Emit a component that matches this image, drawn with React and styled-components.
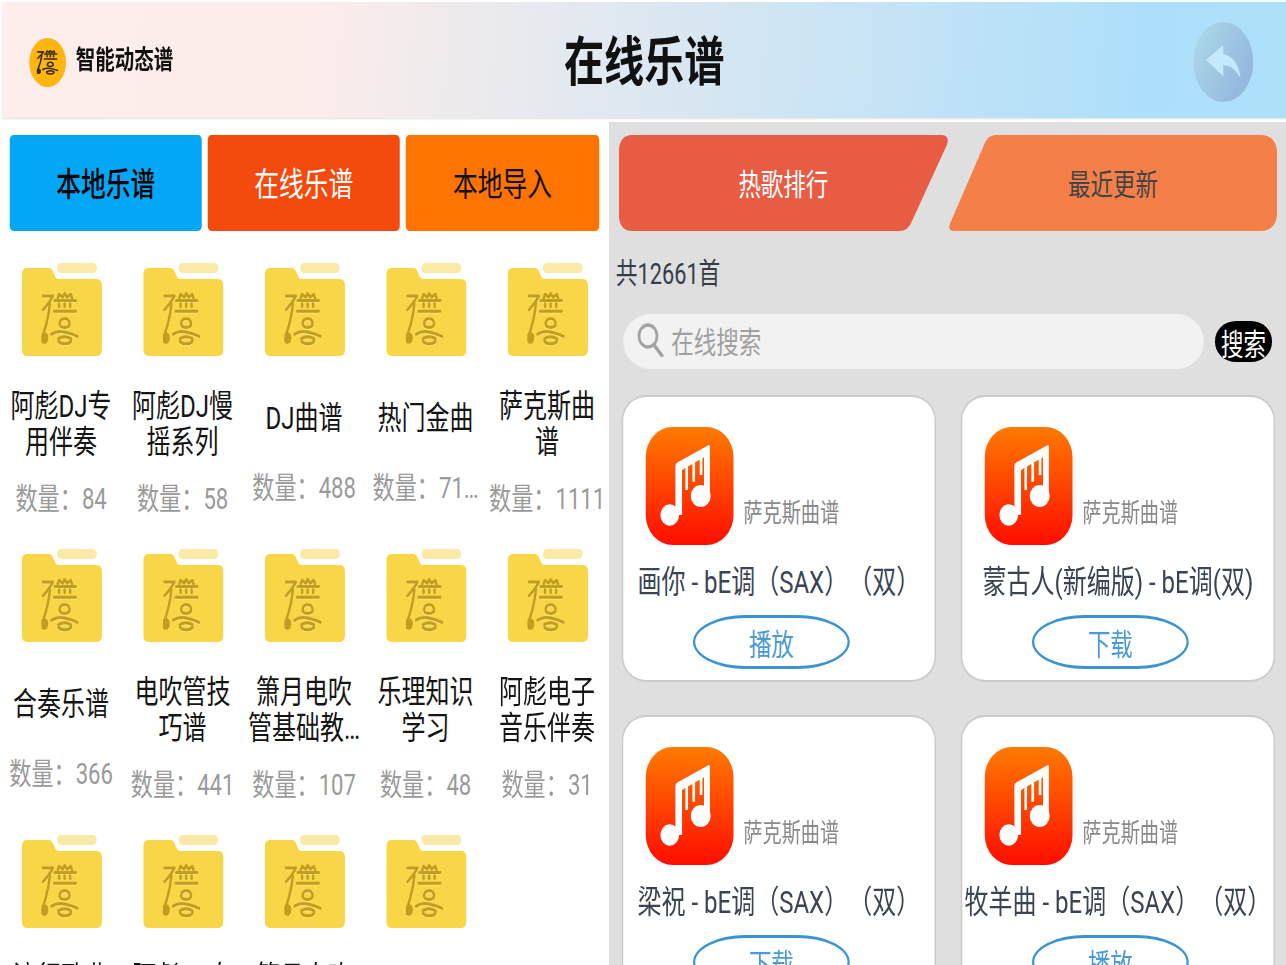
import React from "react";
import styled, { createGlobalStyle } from "styled-components";

const GlobalStyle = createGlobalStyle`
  html, body {
    margin: 0;
    padding: 0;
    overflow: hidden;
    background: #fff;
  }
  #root {
    width: 1286px;
    height: 965px;
    overflow: hidden;
  }
  * {
    box-sizing: border-box;
  }
`;

/* the app was photographed squeezed sideways, so the whole page is laid out wider and narrowed */
const Stage = styled.div`
  width: 1715px;
  height: 965px;
  transform: scale(0.75, 1);
  transform-origin: 0 0;
  font-family: Roboto, "Noto Sans CJK SC", sans-serif;
  text-spacing-trim: space-all;
  color: #111;
`;

const Header = styled.header`
  display: grid;
  grid-template-columns: 1fr auto 1fr;
  align-items: center;
  height: 116px;
  margin: 2px 0 4px 3px;
  padding: 4px 44px 0 44px;
  background: linear-gradient(96deg, #fdeeeb 0%, #fcedea 24%, #aedffa 88%, #aee0fa 100%);
  box-shadow: 0 1px 2px rgba(0, 0, 0, 0.12);
`;

const Brand = styled.div`
  display: flex;
  align-items: center;
  gap: 13px;
  margin-left: -8px;
`;

const Logo = styled.div`
  display: flex;
  align-items: center;
  justify-content: center;
  width: 49px;
  height: 49px;
  border-radius: 50%;
  background: #fdb50f;
`;

const BrandName = styled.span`
  font-size: 26px;
  font-weight: 700;
  line-height: 36px;
  margin-top: -4px;
`;

const Title = styled.h1`
  margin: 2px 0 0;
  font-size: 53.500px;
  font-weight: 700;
  line-height: 70px;
`;

const BackButton = styled.div`
  justify-self: end;
  width: 80px;
  height: 80px;
  border-radius: 50%;
  background: linear-gradient(120deg, #aedbe9, #8fb0dc);
`;

const Body = styled.div`
  display: flex;
  height: 843px;
`;

const LeftPanel = styled.section`
  width: 812px;
  padding-top: 13px;
  background: #fff;
`;

const TabRow = styled.div`
  display: flex;
  gap: 8px;
  padding: 0 13px;
`;

const Tab = styled.div`
  display: flex;
  align-items: center;
  justify-content: center;
  flex: ${({ $wide }) => ($wide ? "0 0 258px" : "0 0 256px")};
  height: 96px;
  padding-bottom: 2px;
  border-radius: 5px;
  background: ${({ $bg }) => $bg};
  color: ${({ $fg }) => $fg};
  font-size: 33px;
  font-weight: ${({ $bold }) => ($bold ? 500 : 400)};
`;

const FolderGrid = styled.div`
  display: grid;
  grid-template-columns: repeat(5, 162px);
  grid-auto-rows: 286px;
  padding: 32px 0 0 1px;
`;

const FolderItem = styled.div`
  display: flex;
  flex-direction: column;
  align-items: center;
`;

const FolderText = styled.div`
  flex: 1;
  display: flex;
  flex-direction: column;
  align-items: center;
  justify-content: center;
  gap: ${({ $single }) => ($single ? "34px" : "21px")};
`;

const FolderName = styled.div`
  width: 154px;
  margin-left: -1px;
  font-size: 32px;
  line-height: 36px;
  text-align: center;
  color: #151515;
`;

const FolderCount = styled.div`
  margin-left: -1px;
  font-size: 29.500px;
  line-height: 36px;
  white-space: nowrap;
  color: #9a9a9a;
`;

const RightPanel = styled.section`
  flex: 1;
  padding-top: 13px;
  background: #dfdfdf;
`;

const SwitchRow = styled.div`
  display: flex;
  gap: 1px;
  padding-left: 13px;
`;

const SwitchButton = styled.div`
  display: flex;
  align-items: center;
  justify-content: center;
  width: ${({ $w }) => $w}px;
  height: 96px;
  padding-bottom: 2px;
  background: ${({ $bg }) => $bg};
  color: ${({ $fg }) => $fg};
  font-size: 30px;
  clip-path: path("${({ $shape }) => $shape}");
`;

const Total = styled.div`
  margin: 23px 0 20px 9px;
  font-size: 29px;
  line-height: 40px;
  color: #333d4a;
`;

const SearchRow = styled.div`
  display: flex;
  align-items: center;
  gap: 15px;
  padding-left: 19px;
`;

const SearchBox = styled.div`
  display: flex;
  align-items: center;
  gap: 10px;
  width: 774px;
  height: 55px;
  padding: 0 0 3px 18px;
  border-radius: 37px / 27px;
  background: #f2f2f2;
  color: #a0a0a0;
  font-size: 30px;
`;

const SearchButton = styled.div`
  display: flex;
  align-items: center;
  justify-content: center;
  width: 76px;
  height: 41px;
  border-radius: 28px / 20px;
  background: #000;
  color: #fff;
  font-size: 30px;
`;

const CardGrid = styled.div`
  display: grid;
  grid-template-columns: repeat(2, 419px);
  grid-auto-rows: 287px;
  gap: 33px;
  padding: 26px 0 0 17px;
`;

const Card = styled.article`
  display: flex;
  flex-direction: column;
  padding-top: 30px;
  border: 2px solid #cbcbcb;
  border-radius: 33px / 25px;
  background: #fff;
`;

const CardTop = styled.div`
  display: flex;
  align-items: flex-end;
  gap: 13px;
  padding-left: 30px;
`;

const AppIcon = styled.div`
  flex: none;
  width: 117px;
  height: 118px;
  border-radius: 36px / 30px;
  background: linear-gradient(180deg, #ff7a00, #ff0d00);
`;

const Source = styled.span`
  margin-bottom: 14px;
  font-size: 25.6px;
  line-height: 36px;
  color: #8a8a8a;
`;

const SongTitle = styled.div`
  margin-top: 17px;
  font-size: 32px;
  line-height: 40px;
  text-align: center;
  white-space: nowrap;
  color: #3a4453;
`;

const ActionButton = styled.div`
  display: flex;
  align-items: center;
  justify-content: center;
  align-self: center;
  width: 209px;
  height: 54px;
  margin: 13px 20px 0 0;
  border: 3px solid #3b93cf;
  border-radius: 70px / 27px;
  color: #4a9ad4;
  font-size: 30px;
`;

const folders = [
  { name: "阿彪DJ专用伴奏", count: "84" },
  { name: "阿彪DJ慢摇系列", count: "58" },
  { name: "DJ曲谱", count: "488", single: true },
  { name: "热门金曲", count: "71…", single: true },
  { name: "萨克斯曲谱", count: "1111" },
  { name: "合奏乐谱", count: "366", single: true },
  { name: "电吹管技巧谱", count: "441" },
  { name: "箫月电吹管基础教…", count: "107" },
  { name: "乐理知识学习", count: "48" },
  { name: "阿彪电子音乐伴奏", count: "31" },
  { name: "流行歌曲精选", count: "60" },
  { name: "阿彪DJ女声", count: "25" },
  { name: "箫月电吹管", count: "33" },
  { name: "随心所欲", count: "12" },
];

const songs = [
  { title: "画你 - bE调（SAX）（双）", action: "播放" },
  { title: "蒙古人(新编版) - bE调(双)", action: "下载" },
  { title: "梁祝 - bE调（SAX）（双）", action: "下载" },
  { title: "牧羊曲 - bE调（SAX）（双）", action: "播放" },
];

const RED_SHAPE = "M18 0H430Q441 0 438 9L391 86Q386 96 374 96H18Q0 96 0 78V18Q0 0 18 0Z";
const ORANGE_SHAPE = "M62 0H415Q438 0 438 20V76Q438 96 415 96H7Q-2 96 2 88L47 10Q52 0 62 0Z";

const MarkStrokes = () => (
  <>
    <path d="M40 31H72Q62 48 40 68" />
    <path d="M62 52Q58 90 42 130" />
    <path d="M88 36L92 26L104 34L110 24L118 34L130 26L134 36" />
    <path d="M78 43H146M92 52V60M110 52V60M128 52V60M76 72H146" />
    <path d="M94 104Q96 92 110 92Q124 92 126 104Q127 116 110 116Q92 116 94 104Z" />
    <path d="M68 134Q86 124 110 128T152 140" />
    <path d="M90 146Q110 136 130 146Q134 160 110 160Q88 160 90 146Z" />
  </>
);

const Mark = ({ w, h, color, weight, shine }) => (
  <svg width={w} height={h} viewBox="34 20 122 146" preserveAspectRatio="none" fill="none">
    {shine && (
      <g stroke={shine} strokeWidth={weight} transform="translate(0 3)">
        <MarkStrokes />
      </g>
    )}
    <g stroke={color} strokeWidth={weight} strokeLinecap="round" strokeLinejoin="round">
      <MarkStrokes />
      <ellipse cx="44" cy="144" rx="9" ry="12" fill={color} />
    </g>
  </svg>
);

const FolderIcon = () => (
  <svg width="107" height="93" viewBox="0 0 107 93">
    <rect x="47" y="0" width="53" height="10" rx="5" ry="5" fill="#fbe9a8" />
    <path
      d="M7 5H36Q40 5 42 9L45 14Q46 16 49 16H100Q107 16 107 23V86Q107 93 100 93H7Q0 93 0 86V12Q0 5 7 5Z"
      fill="#f9d648"
    />
    <svg x="26" y="29" width="50" height="54" viewBox="0 0 50 54">
      <Mark w={50} h={54} color="#c39d1e" weight={8} shine="#fbe37e" />
    </svg>
  </svg>
);

const NoteIcon = () => (
  <svg width="117" height="118" viewBox="0 0 117 118" fill="#fff">
    <ellipse cx="32" cy="88" rx="12.5" ry="10.7" />
    <ellipse cx="73.300" cy="69" rx="13.300" ry="11" />
    <path d="M39.500 39Q39.500 36.500 42.500 35.300L83.500 18.200Q85.500 17.500 85.500 20V70H77.700V30.300L48.400 43V88H39.500Z" />
    <path d="M52.900 40H56.400V63H52.900ZM62.200 36H65.800V54.700H62.200ZM72 31H75.500V48H72Z" />
  </svg>
);

const BackIcon = () => (
  <svg width="80" height="80" viewBox="0 0 80 80">
    <path d="M17 38L40 23V32Q60 36 63 56Q54 43 40 43V54Z" fill="#c5e9fc" />
  </svg>
);

const SearchIcon = () => (
  <svg width="36" height="34" viewBox="0 0 36 34" fill="none" stroke="#a3a3a3">
    <ellipse cx="15" cy="13" rx="12" ry="11" strokeWidth="3.500" />
    <path d="M23 22L34 33" strokeWidth="4" strokeLinecap="round" />
  </svg>
);

const App = () => {
  return (
    <>
      <GlobalStyle />
      <Stage>
        <Header>
          <Brand>
            <Logo>
              <Mark w={29} h={25} color="#3b2a0c" weight={9} />
            </Logo>
            <BrandName>智能动态谱</BrandName>
          </Brand>
          <Title>在线乐谱</Title>
          <BackButton>
            <BackIcon />
          </BackButton>
        </Header>
        <Body>
          <LeftPanel>
            <TabRow>
              <Tab $bg="#04a7f5" $fg="#050505" $bold>
                本地乐谱
              </Tab>
              <Tab $bg="#f44a0e" $fg="#fff">
                在线乐谱
              </Tab>
              <Tab $bg="#ff7300" $fg="#111" $wide>
                本地导入
              </Tab>
            </TabRow>
            <FolderGrid>
              {folders.map((folder) => (
                <FolderItem key={folder.name}>
                  <FolderIcon />
                  <FolderText $single={folder.single}>
                    <FolderName>{folder.name}</FolderName>
                    <FolderCount>数量：{folder.count}</FolderCount>
                  </FolderText>
                </FolderItem>
              ))}
            </FolderGrid>
          </LeftPanel>
          <RightPanel>
            <SwitchRow>
              <SwitchButton $w={439} $bg="#e85c44" $fg="#fff" $shape={RED_SHAPE}>
                热歌排行
              </SwitchButton>
              <SwitchButton $w={438} $bg="#f47f48" $fg="#444" $shape={ORANGE_SHAPE}>
                最近更新
              </SwitchButton>
            </SwitchRow>
            <Total>共12661首</Total>
            <SearchRow>
              <SearchBox>
                <SearchIcon />
                在线搜索
              </SearchBox>
              <SearchButton>搜索</SearchButton>
            </SearchRow>
            <CardGrid>
              {songs.map((song) => (
                <Card key={song.title}>
                  <CardTop>
                    <AppIcon>
                      <NoteIcon />
                    </AppIcon>
                    <Source>萨克斯曲谱</Source>
                  </CardTop>
                  <SongTitle>{song.title}</SongTitle>
                  <ActionButton>{song.action}</ActionButton>
                </Card>
              ))}
            </CardGrid>
          </RightPanel>
        </Body>
      </Stage>
    </>
  );
};

export default App;
